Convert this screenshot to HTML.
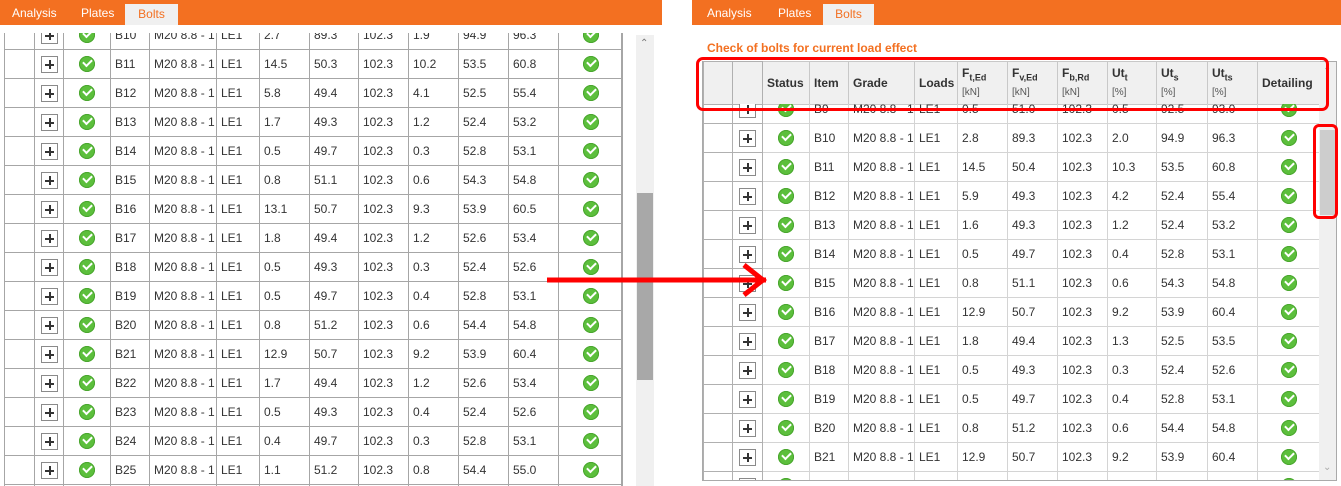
<!DOCTYPE html>
<html style="overflow:hidden"><head><meta charset="utf-8">
<style>
*{margin:0;padding:0;box-sizing:border-box}
html,body{width:1341px;height:486px;overflow:hidden}
body{background:#fff;position:relative;font-family:"Liberation Sans",sans-serif;font-size:12px;color:#333}
.bar{position:absolute;top:0;height:25px;background:#f37021}
.tab{position:absolute;top:6px;color:#fff;font-size:12px}
.tabsel{position:absolute;top:4px;height:21px;background:#f0f0f0;color:#f37021;font-size:12px;padding:3px 0 0 0;text-align:center}
.clip{position:absolute;overflow:hidden}
table{border-collapse:collapse;table-layout:fixed;position:absolute;left:0}
td{height:29px;padding:0 0 0 4px;white-space:nowrap;overflow:hidden;font-size:12px;color:#333}
.L td{border:1px solid #a6a6a6}
.R td{border:1px solid #d4d4d4}
.R td:nth-child(1),.R td:nth-child(2){border-color:#b0b0b0}
td.c{text-align:center;padding:0}
.pl{display:inline-block;width:17px;height:17px;border:1px solid #8a8a8a;background:#fff;position:relative;vertical-align:middle}
.pl:before{content:"";position:absolute;left:3px;top:7px;width:9px;height:2px;background:#333}
.pl:after{content:"";position:absolute;left:7px;top:3px;width:2px;height:9px;background:#333}
.ok{display:inline-block;width:16px;height:16px;border-radius:50%;background:#5cbf3c;vertical-align:middle;position:relative;box-shadow:inset 0 0 0 1px #49a52e}
.ok:after{content:"";position:absolute;left:4px;top:3px;width:7px;height:4px;border-left:2px solid #fff;border-bottom:2px solid #fff;transform:rotate(-45deg)}
.hd td{height:43px;background:#f0f0f0;font-weight:bold;border:1px solid #c8c8c8;vertical-align:middle;line-height:13px}
.hd small{font-weight:normal;font-size:10px;color:#555}
.hd sub{font-size:9px}
</style></head><body>
<div class="bar" style="left:0;width:662px"></div>
<div class="tab" style="left:12px">Analysis</div>
<div class="tab" style="left:81px">Plates</div>
<div class="tabsel" style="left:125px;width:53px">Bolts</div>
<div class="bar" style="left:692px;width:649px"></div>
<div class="tab" style="left:707px">Analysis</div>
<div class="tab" style="left:778px">Plates</div>
<div class="tabsel" style="left:823px;width:51px">Bolts</div>

<!-- left -->
<div class="clip" style="left:4px;top:33px;width:619px;height:453px;border-right:2px solid #a6a6a6">
<table class="L" style="top:-13px;width:618px">
<colgroup><col style="width:30px"><col style="width:29px"><col style="width:47px"><col style="width:39px"><col style="width:67px"><col style="width:43px"><col style="width:50px"><col style="width:49px"><col style="width:50px"><col style="width:50px"><col style="width:50px"><col style="width:50px"><col style="width:64px"></colgroup>
<tr><td></td><td class="c"><span class="pl"></span></td><td class="c"><span class="ok"></span></td><td>B10</td><td>M20 8.8 - 1</td><td>LE1</td><td>2.7</td><td>89.3</td><td>102.3</td><td>1.9</td><td>94.9</td><td>96.3</td><td class="c"><span class="ok"></span></td></tr>
<tr><td></td><td class="c"><span class="pl"></span></td><td class="c"><span class="ok"></span></td><td>B11</td><td>M20 8.8 - 1</td><td>LE1</td><td>14.5</td><td>50.3</td><td>102.3</td><td>10.2</td><td>53.5</td><td>60.8</td><td class="c"><span class="ok"></span></td></tr>
<tr><td></td><td class="c"><span class="pl"></span></td><td class="c"><span class="ok"></span></td><td>B12</td><td>M20 8.8 - 1</td><td>LE1</td><td>5.8</td><td>49.4</td><td>102.3</td><td>4.1</td><td>52.5</td><td>55.4</td><td class="c"><span class="ok"></span></td></tr>
<tr><td></td><td class="c"><span class="pl"></span></td><td class="c"><span class="ok"></span></td><td>B13</td><td>M20 8.8 - 1</td><td>LE1</td><td>1.7</td><td>49.3</td><td>102.3</td><td>1.2</td><td>52.4</td><td>53.2</td><td class="c"><span class="ok"></span></td></tr>
<tr><td></td><td class="c"><span class="pl"></span></td><td class="c"><span class="ok"></span></td><td>B14</td><td>M20 8.8 - 1</td><td>LE1</td><td>0.5</td><td>49.7</td><td>102.3</td><td>0.3</td><td>52.8</td><td>53.1</td><td class="c"><span class="ok"></span></td></tr>
<tr><td></td><td class="c"><span class="pl"></span></td><td class="c"><span class="ok"></span></td><td>B15</td><td>M20 8.8 - 1</td><td>LE1</td><td>0.8</td><td>51.1</td><td>102.3</td><td>0.6</td><td>54.3</td><td>54.8</td><td class="c"><span class="ok"></span></td></tr>
<tr><td></td><td class="c"><span class="pl"></span></td><td class="c"><span class="ok"></span></td><td>B16</td><td>M20 8.8 - 1</td><td>LE1</td><td>13.1</td><td>50.7</td><td>102.3</td><td>9.3</td><td>53.9</td><td>60.5</td><td class="c"><span class="ok"></span></td></tr>
<tr><td></td><td class="c"><span class="pl"></span></td><td class="c"><span class="ok"></span></td><td>B17</td><td>M20 8.8 - 1</td><td>LE1</td><td>1.8</td><td>49.4</td><td>102.3</td><td>1.2</td><td>52.6</td><td>53.4</td><td class="c"><span class="ok"></span></td></tr>
<tr><td></td><td class="c"><span class="pl"></span></td><td class="c"><span class="ok"></span></td><td>B18</td><td>M20 8.8 - 1</td><td>LE1</td><td>0.5</td><td>49.3</td><td>102.3</td><td>0.3</td><td>52.4</td><td>52.6</td><td class="c"><span class="ok"></span></td></tr>
<tr><td></td><td class="c"><span class="pl"></span></td><td class="c"><span class="ok"></span></td><td>B19</td><td>M20 8.8 - 1</td><td>LE1</td><td>0.5</td><td>49.7</td><td>102.3</td><td>0.4</td><td>52.8</td><td>53.1</td><td class="c"><span class="ok"></span></td></tr>
<tr><td></td><td class="c"><span class="pl"></span></td><td class="c"><span class="ok"></span></td><td>B20</td><td>M20 8.8 - 1</td><td>LE1</td><td>0.8</td><td>51.2</td><td>102.3</td><td>0.6</td><td>54.4</td><td>54.8</td><td class="c"><span class="ok"></span></td></tr>
<tr><td></td><td class="c"><span class="pl"></span></td><td class="c"><span class="ok"></span></td><td>B21</td><td>M20 8.8 - 1</td><td>LE1</td><td>12.9</td><td>50.7</td><td>102.3</td><td>9.2</td><td>53.9</td><td>60.4</td><td class="c"><span class="ok"></span></td></tr>
<tr><td></td><td class="c"><span class="pl"></span></td><td class="c"><span class="ok"></span></td><td>B22</td><td>M20 8.8 - 1</td><td>LE1</td><td>1.7</td><td>49.4</td><td>102.3</td><td>1.2</td><td>52.6</td><td>53.4</td><td class="c"><span class="ok"></span></td></tr>
<tr><td></td><td class="c"><span class="pl"></span></td><td class="c"><span class="ok"></span></td><td>B23</td><td>M20 8.8 - 1</td><td>LE1</td><td>0.5</td><td>49.3</td><td>102.3</td><td>0.4</td><td>52.4</td><td>52.6</td><td class="c"><span class="ok"></span></td></tr>
<tr><td></td><td class="c"><span class="pl"></span></td><td class="c"><span class="ok"></span></td><td>B24</td><td>M20 8.8 - 1</td><td>LE1</td><td>0.4</td><td>49.7</td><td>102.3</td><td>0.3</td><td>52.8</td><td>53.1</td><td class="c"><span class="ok"></span></td></tr>
<tr><td></td><td class="c"><span class="pl"></span></td><td class="c"><span class="ok"></span></td><td>B25</td><td>M20 8.8 - 1</td><td>LE1</td><td>1.1</td><td>51.2</td><td>102.3</td><td>0.8</td><td>54.4</td><td>55.0</td><td class="c"><span class="ok"></span></td></tr>
<tr><td></td><td class="c"><span class="pl"></span></td><td class="c"><span class="ok"></span></td><td>B26</td><td>M20 8.8 - 1</td><td>LE1</td><td>0.5</td><td>50.7</td><td>102.3</td><td>0.4</td><td>53.9</td><td>54.2</td><td class="c"><span class="ok"></span></td></tr>
</table></div>
<div style="position:absolute;left:636px;top:35px;width:18px;height:451px;background:#f0f0f0"></div>
<div style="position:absolute;left:640px;top:38px;font-size:10px;color:#777">&#8963;</div>
<div style="position:absolute;left:637px;top:193px;width:16px;height:187px;background:#a8a8a8"></div>

<!-- right -->
<div style="position:absolute;left:707px;top:41px;color:#f37021;font-weight:bold;font-size:12px">Check of bolts for current load effect</div>
<div style="position:absolute;left:702px;top:61px;width:635px;height:420px;border:1px solid #aaa;background:#fff"></div>
<div class="clip" style="left:703px;top:61px;width:617px;height:44px">
<table class="R hd" style="top:0;width:617px">
<colgroup><col style="width:29px"><col style="width:30px"><col style="width:47px"><col style="width:39px"><col style="width:66px"><col style="width:43px"><col style="width:50px"><col style="width:50px"><col style="width:50px"><col style="width:49px"><col style="width:51px"><col style="width:50px"><col style="width:63px"></colgroup>
<tr class="hd"><td></td><td></td><td>Status</td><td>Item</td><td>Grade</td><td>Loads</td><td>F<sub>t,Ed</sub><br><small>[kN]</small></td><td>F<sub>v,Ed</sub><br><small>[kN]</small></td><td>F<sub>b,Rd</sub><br><small>[kN]</small></td><td>Ut<sub>t</sub><br><small>[%]</small></td><td>Ut<sub>s</sub><br><small>[%]</small></td><td>Ut<sub>ts</sub><br><small>[%]</small></td><td>Detailing</td></tr>
</table></div>
<div class="clip" style="left:703px;top:104px;width:616px;height:376px">
<table class="R" style="top:-10px;width:617px">
<colgroup><col style="width:29px"><col style="width:30px"><col style="width:47px"><col style="width:39px"><col style="width:66px"><col style="width:43px"><col style="width:50px"><col style="width:50px"><col style="width:50px"><col style="width:49px"><col style="width:51px"><col style="width:50px"><col style="width:63px"></colgroup>
<tr><td></td><td class="c"><span class="pl"></span></td><td class="c"><span class="ok"></span></td><td>B9</td><td>M20 8.8 - 1</td><td>LE1</td><td>0.5</td><td>51.0</td><td>102.3</td><td>0.5</td><td>92.5</td><td>93.0</td><td class="c"><span class="ok"></span></td></tr>
<tr><td></td><td class="c"><span class="pl"></span></td><td class="c"><span class="ok"></span></td><td>B10</td><td>M20 8.8 - 1</td><td>LE1</td><td>2.8</td><td>89.3</td><td>102.3</td><td>2.0</td><td>94.9</td><td>96.3</td><td class="c"><span class="ok"></span></td></tr>
<tr><td></td><td class="c"><span class="pl"></span></td><td class="c"><span class="ok"></span></td><td>B11</td><td>M20 8.8 - 1</td><td>LE1</td><td>14.5</td><td>50.4</td><td>102.3</td><td>10.3</td><td>53.5</td><td>60.8</td><td class="c"><span class="ok"></span></td></tr>
<tr><td></td><td class="c"><span class="pl"></span></td><td class="c"><span class="ok"></span></td><td>B12</td><td>M20 8.8 - 1</td><td>LE1</td><td>5.9</td><td>49.3</td><td>102.3</td><td>4.2</td><td>52.4</td><td>55.4</td><td class="c"><span class="ok"></span></td></tr>
<tr><td></td><td class="c"><span class="pl"></span></td><td class="c"><span class="ok"></span></td><td>B13</td><td>M20 8.8 - 1</td><td>LE1</td><td>1.6</td><td>49.3</td><td>102.3</td><td>1.2</td><td>52.4</td><td>53.2</td><td class="c"><span class="ok"></span></td></tr>
<tr><td></td><td class="c"><span class="pl"></span></td><td class="c"><span class="ok"></span></td><td>B14</td><td>M20 8.8 - 1</td><td>LE1</td><td>0.5</td><td>49.7</td><td>102.3</td><td>0.4</td><td>52.8</td><td>53.1</td><td class="c"><span class="ok"></span></td></tr>
<tr><td></td><td class="c"><span class="pl"></span></td><td class="c"><span class="ok"></span></td><td>B15</td><td>M20 8.8 - 1</td><td>LE1</td><td>0.8</td><td>51.1</td><td>102.3</td><td>0.6</td><td>54.3</td><td>54.8</td><td class="c"><span class="ok"></span></td></tr>
<tr><td></td><td class="c"><span class="pl"></span></td><td class="c"><span class="ok"></span></td><td>B16</td><td>M20 8.8 - 1</td><td>LE1</td><td>12.9</td><td>50.7</td><td>102.3</td><td>9.2</td><td>53.9</td><td>60.4</td><td class="c"><span class="ok"></span></td></tr>
<tr><td></td><td class="c"><span class="pl"></span></td><td class="c"><span class="ok"></span></td><td>B17</td><td>M20 8.8 - 1</td><td>LE1</td><td>1.8</td><td>49.4</td><td>102.3</td><td>1.3</td><td>52.5</td><td>53.5</td><td class="c"><span class="ok"></span></td></tr>
<tr><td></td><td class="c"><span class="pl"></span></td><td class="c"><span class="ok"></span></td><td>B18</td><td>M20 8.8 - 1</td><td>LE1</td><td>0.5</td><td>49.3</td><td>102.3</td><td>0.3</td><td>52.4</td><td>52.6</td><td class="c"><span class="ok"></span></td></tr>
<tr><td></td><td class="c"><span class="pl"></span></td><td class="c"><span class="ok"></span></td><td>B19</td><td>M20 8.8 - 1</td><td>LE1</td><td>0.5</td><td>49.7</td><td>102.3</td><td>0.4</td><td>52.8</td><td>53.1</td><td class="c"><span class="ok"></span></td></tr>
<tr><td></td><td class="c"><span class="pl"></span></td><td class="c"><span class="ok"></span></td><td>B20</td><td>M20 8.8 - 1</td><td>LE1</td><td>0.8</td><td>51.2</td><td>102.3</td><td>0.6</td><td>54.4</td><td>54.8</td><td class="c"><span class="ok"></span></td></tr>
<tr><td></td><td class="c"><span class="pl"></span></td><td class="c"><span class="ok"></span></td><td>B21</td><td>M20 8.8 - 1</td><td>LE1</td><td>12.9</td><td>50.7</td><td>102.3</td><td>9.2</td><td>53.9</td><td>60.4</td><td class="c"><span class="ok"></span></td></tr>
<tr><td></td><td class="c"><span class="pl"></span></td><td class="c"><span class="ok"></span></td><td>B22</td><td>M20 8.8 - 1</td><td>LE1</td><td>1.7</td><td>49.4</td><td>102.3</td><td>1.2</td><td>52.6</td><td>53.4</td><td class="c"><span class="ok"></span></td></tr>
</table></div>
<div style="position:absolute;left:1319px;top:62px;width:17px;height:418px;background:#f0f0f0"></div>
<div style="position:absolute;left:1323px;top:66px;font-size:10px;color:#aaa">&#8963;</div>
<div style="position:absolute;left:1323px;top:462px;font-size:10px;color:#aaa">&#8964;</div>
<div style="position:absolute;left:1320px;top:130px;width:15px;height:85px;background:#cdcdcd"></div>

<!-- annotations -->
<div style="position:absolute;left:696px;top:57px;width:633px;height:54px;border:3px solid #f00;border-radius:7px"></div>
<div style="position:absolute;left:1313px;top:124px;width:25px;height:95px;border:3px solid #f00;border-radius:6px"></div>
<svg style="position:absolute;left:0;top:0" width="1341" height="486">
<line x1="547" y1="280" x2="766" y2="280" stroke="#f00" stroke-width="5"/>
<polyline points="744,265 763,280 744,295" fill="none" stroke="#f00" stroke-width="5"/>
</svg>
</body></html>
